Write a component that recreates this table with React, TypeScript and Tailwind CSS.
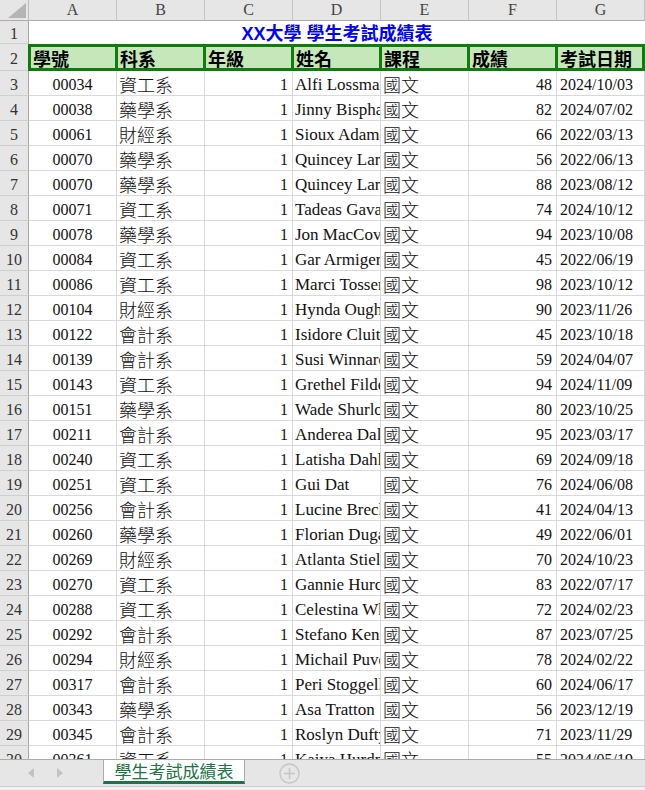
import type { ReactNode } from 'react';

const serif = "font-['Liberation_Serif','Times_New_Roman','Noto_Sans_CJK_TC',serif]";
const cjk = "font-['Noto_Sans_CJK_TC','Noto_Sans_CJK_SC',sans-serif]";

const COLS = ['A', 'B', 'C', 'D', 'E', 'F', 'G'];
const HEADS = ['學號', '科系', '年級', '姓名', '課程', '成績', '考試日期'];

// id, dept, name, score, date
const rows: [string, string, string, number, string][] = [
  ['00034', '資工系', 'Alfi Lossman', 48, '2024/10/03'],
  ['00038', '藥學系', 'Jinny Bispham', 82, '2024/07/02'],
  ['00061', '財經系', 'Sioux Adamec', 66, '2022/03/13'],
  ['00070', '藥學系', 'Quincey Larkin', 56, '2022/06/13'],
  ['00070', '藥學系', 'Quincey Larkin', 88, '2023/08/12'],
  ['00071', '資工系', 'Tadeas Gavahan', 74, '2024/10/12'],
  ['00078', '藥學系', 'Jon MacCoveney', 94, '2023/10/08'],
  ['00084', '資工系', 'Gar Armiger', 45, '2022/06/19'],
  ['00086', '資工系', 'Marci Tosser', 98, '2023/10/12'],
  ['00104', '財經系', 'Hynda Oughton', 90, '2023/11/26'],
  ['00122', '會計系', 'Isidore Cluitt', 45, '2023/10/18'],
  ['00139', '會計系', 'Susi Winnard', 59, '2024/04/07'],
  ['00143', '資工系', 'Grethel Filde', 94, '2024/11/09'],
  ['00151', '藥學系', 'Wade Shurlock', 80, '2023/10/25'],
  ['00211', '會計系', 'Anderea Dalgarno', 95, '2023/03/17'],
  ['00240', '資工系', 'Latisha Dahl', 69, '2024/09/18'],
  ['00251', '資工系', 'Gui Dat', 76, '2024/06/08'],
  ['00256', '會計系', 'Lucine Brecknall', 41, '2024/04/13'],
  ['00260', '藥學系', 'Florian Dugan', 49, '2022/06/01'],
  ['00269', '財經系', 'Atlanta Stiell', 70, '2024/10/23'],
  ['00270', '資工系', 'Gannie Hurche', 83, '2022/07/17'],
  ['00288', '資工系', 'Celestina Whitby', 72, '2024/02/23'],
  ['00292', '會計系', 'Stefano Kenner', 87, '2023/07/25'],
  ['00294', '財經系', 'Michail Puvey', 78, '2024/02/22'],
  ['00317', '會計系', 'Peri Stoggell', 60, '2024/06/17'],
  ['00343', '藥學系', 'Asa Tratton', 56, '2023/12/19'],
  ['00345', '會計系', 'Roslyn Dufty', 71, '2023/11/29'],
  ['00361', '資工系', 'Kaiya Hurdman', 55, '2024/05/19'],
];

function RowHead({ n, h }: { n: number; h: string }) {
  return (
    <div
      className={`flex w-[29px] shrink-0 items-center justify-center border-b border-r border-b-[#cfcfcf] border-r-[#a8a8a8] bg-[#e6e6e6] pt-[3px] text-[16px] leading-none text-[#333] ${h} ${serif}`}
    >
      {n}
    </div>
  );
}

function Cell({ children, cls = '' }: { children: ReactNode; cls?: string }) {
  return (
    <div
      className={`flex h-[25px] w-[88px] shrink-0 items-center overflow-hidden whitespace-nowrap border-b border-r border-[#d9d9d9] text-[#111] ${cls}`}
    >
      {children}
    </div>
  );
}

export default function App() {
  return (
    <div className="flex h-[790px] w-[645px] flex-col overflow-hidden bg-white">
      <div className="flex-1 overflow-hidden">
        {/* column letters */}
        <div className="flex h-[21px]">
          <div className="flex w-[29px] shrink-0 items-end justify-end border-b border-r border-b-[#ababab] border-r-[#bdbdbd] bg-[#e6e6e6] pb-[2px] pr-[2px]">
            <svg width="18" height="15" viewBox="0 0 18 15">
              <polygon points="18,0 18,15 0,15" fill="#b5b5b5" />
            </svg>
          </div>
          {COLS.map((c) => (
            <div
              key={c}
              className={`flex w-[88px] shrink-0 items-center justify-center border-b border-r border-b-[#ababab] border-r-[#c4c4c4] bg-[#e6e6e6] text-[16px] leading-none text-[#444] ${serif}`}
            >
              {c}
            </div>
          ))}
        </div>

        {/* row 1: merged title */}
        <div className="flex">
          <RowHead n={1} h="h-[23px]" />
          <div
            className={`flex h-[23px] w-[616px] shrink-0 items-center justify-center pt-[2px] text-[18px] font-bold leading-none text-[#0000ff] font-['Liberation_Sans','Noto_Sans_CJK_TC',sans-serif]`}
          >
            XX大學 學生考試成績表
          </div>
        </div>

        {/* row 2: green header */}
        <div className="flex">
          <div
            className={`flex h-[27px] w-[28px] shrink-0 items-center justify-center border-b border-[#cfcfcf] bg-[#e6e6e6] pt-[4px] text-[16px] leading-none text-[#333] ${serif}`}
          >
            2
          </div>
          <div className="grid h-[27px] w-[617px] shrink-0 grid-cols-[84px_85px_85px_85px_85px_85px_84px] gap-[3px] bg-[#107c10] p-[3px]">
            {HEADS.map((h) => (
              <div
                key={h}
                className={`flex items-center bg-[#c6e7b9] pl-[2px] text-[18px] font-bold leading-none text-black ${cjk}`}
              >
                {h}
              </div>
            ))}
          </div>
        </div>

        {rows.map(([id, dept, name, score, date], i) => (
          <div key={i} className="flex">
            <RowHead n={i + 3} h="h-[25px]" />
            <Cell cls={`justify-center pt-[3px] text-[16px] leading-none ${serif}`}>{id}</Cell>
            <Cell cls={`pl-[2px] pt-[2px] text-[18px] font-light leading-none ${cjk}`}>{dept}</Cell>
            <Cell cls={`justify-end pr-[4px] pt-[3px] text-[16px] leading-none ${serif}`}>1</Cell>
            <Cell cls={`pl-[2px] pt-[3px] text-[17px] leading-none ${serif}`}>{name}</Cell>
            <Cell cls={`pl-[2px] pt-[2px] text-[18px] font-light leading-none ${cjk}`}>國文</Cell>
            <Cell cls={`justify-end pr-[4px] pt-[3px] text-[16px] leading-none ${serif}`}>{score}</Cell>
            <Cell cls={`pl-[3px] pt-[3px] text-[16px] leading-none ${serif}`}>{date}</Cell>
          </div>
        ))}
      </div>

      {/* sheet tabs */}
      <div className="flex h-[27px] shrink-0 items-start border-t border-[#ababab] bg-[#e6e6e6]">
        <div className="flex h-[26px] w-[103px] shrink-0 items-center gap-[23px] pl-[28px]">
          <svg width="6" height="10" viewBox="0 0 6 10">
            <polygon points="6,0 6,10 0,5" fill="#c2c2c2" />
          </svg>
          <svg width="6" height="10" viewBox="0 0 6 10">
            <polygon points="0,0 0,10 6,5" fill="#c2c2c2" />
          </svg>
        </div>
        <div
          className={`flex h-[24px] w-[142px] shrink-0 items-center justify-center border-x border-b-[3px] border-x-[#ababab] border-b-[#217346] bg-white text-[17px] leading-none text-[#217346] ${cjk}`}
        >
          學生考試成績表
        </div>
        <div className="ml-[34px] flex h-[26px] items-center">
          <svg width="21" height="21" viewBox="0 0 21 21">
            <circle cx="10.5" cy="10.5" r="9.5" fill="none" stroke="#c6c6c6" strokeWidth="1.4" />
            <path d="M10.5 5v11M5 10.5h11" stroke="#c6c6c6" strokeWidth="1.6" />
          </svg>
        </div>
      </div>
      <div className="h-[4px] shrink-0 border-t border-[#cdcdcd] bg-[#f2f2f2]" />
    </div>
  );
}
